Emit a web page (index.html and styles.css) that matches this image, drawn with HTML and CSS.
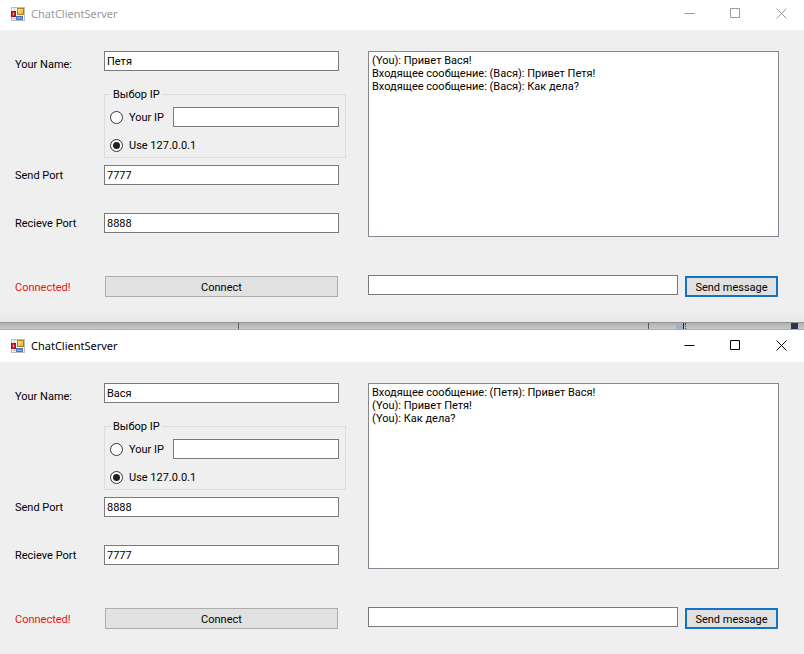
FILE: index.html
```html
<!DOCTYPE html>
<html lang="ru">
<head>
<meta charset="utf-8">
<title>ChatClientServer</title>
<link rel="stylesheet" href="styles.css">
</head>
<body>
<svg class="defs" width="0" height="0" aria-hidden="true">
  <defs>
    <linearGradient id="gold" x1="0" y1="0" x2="1" y2="1"><stop offset="0" stop-color="#fff0a0"/><stop offset="1" stop-color="#e0a410"/></linearGradient>
    <linearGradient id="blue" x1="0" y1="0" x2="0" y2="1"><stop offset="0" stop-color="#3f78d0"/><stop offset="1" stop-color="#9cc4f4"/></linearGradient>
    <symbol id="app" viewBox="0 0 14 14">
      <rect x=".5" y=".5" width="13" height="13" fill="#f8f8f8" stroke="#b9bcc0"/>
      <path d="M3.5 1v3M3.5 10v3M1 11.5h4" stroke="#c8cbd0"/>
      <rect x=".5" y="4.500" width="4" height="5" fill="#c83030" stroke="#991515"/>
      <rect x="2" y="6" width="1" height="2" fill="#f0a0a0"/>
      <rect x="6.500" y="1.500" width="6" height="6" fill="url(#gold)" stroke="#b08414"/>
      <rect x="5.500" y="9.500" width="6" height="3" fill="url(#blue)" stroke="#4a78bd"/>
    </symbol>
    <symbol id="min" viewBox="0 0 11 11"><path d="M.5 5.500h10" stroke="currentColor"/></symbol>
    <symbol id="max" viewBox="0 0 11 11"><path d="M1 1h9v9H1z" transform="translate(-.5 -.5)" fill="none" stroke="currentColor"/></symbol>
    <symbol id="close" viewBox="0 0 11 11"><path d="M.5.5l10 10M10.500.5l-10 10" stroke="currentColor"/></symbol>
  </defs>
</svg>

<section class="window inactive">
  <header class="titlebar">
    <svg class="app-icon"><use href="#app"/></svg>
    <h1>ChatClientServer</h1>
    <div class="caption">
      <button type="button" aria-label="Minimize"><svg><use href="#min"/></svg></button>
      <button type="button" aria-label="Maximize"><svg><use href="#max"/></svg></button>
      <button type="button" aria-label="Close"><svg><use href="#close"/></svg></button>
    </div>
  </header>
  <main class="client">
    <form class="settings">
      <div class="row name"><label for="name1">Your Name:</label><input class="box" id="name1" type="text" value="Петя"></div>
      <fieldset>
        <legend>Выбор IP</legend>
        <div class="option"><input type="radio" name="ip" id="own1"><label for="own1">Your IP</label><input class="box" type="text" aria-label="Your IP"></div>
        <div class="option"><input type="radio" name="ip" id="local1" checked><label for="local1">Use 127.0.0.1</label></div>
      </fieldset>
      <div class="row"><label for="send1">Send Port</label><input class="box" id="send1" type="text" value="7777"></div>
      <div class="row receive"><label for="recv1">Recieve Port</label><input class="box" id="recv1" type="text" value="8888"></div>
      <div class="row connect"><output>Connected!</output><button type="button" class="push">Connect</button></div>
    </form>
    <form class="chat">
      <textarea aria-label="Messages" readonly>(You): Привет Вася!
Входящее сообщение: (Вася): Привет Петя!
Входящее сообщение: (Вася): Как дела?</textarea>
      <div class="compose"><input class="box" type="text" aria-label="Message"><button type="button" class="push default">Send message</button></div>
    </form>
  </main>
</section>

<div class="backdrop"><span class="seam"></span><span class="seam"></span><span class="block"></span><span class="grip"></span><span class="dark"></span></div>

<section class="window active">
  <header class="titlebar">
    <svg class="app-icon"><use href="#app"/></svg>
    <h1>ChatClientServer</h1>
    <div class="caption">
      <button type="button" aria-label="Minimize"><svg><use href="#min"/></svg></button>
      <button type="button" aria-label="Maximize"><svg><use href="#max"/></svg></button>
      <button type="button" aria-label="Close"><svg><use href="#close"/></svg></button>
    </div>
  </header>
  <main class="client">
    <form class="settings">
      <div class="row name"><label for="name2">Your Name:</label><input class="box" id="name2" type="text" value="Вася"></div>
      <fieldset>
        <legend>Выбор IP</legend>
        <div class="option"><input type="radio" name="ip" id="own2"><label for="own2">Your IP</label><input class="box" type="text" aria-label="Your IP"></div>
        <div class="option"><input type="radio" name="ip" id="local2" checked><label for="local2">Use 127.0.0.1</label></div>
      </fieldset>
      <div class="row"><label for="send2">Send Port</label><input class="box" id="send2" type="text" value="8888"></div>
      <div class="row receive"><label for="recv2">Recieve Port</label><input class="box" id="recv2" type="text" value="7777"></div>
      <div class="row connect"><output>Connected!</output><button type="button" class="push">Connect</button></div>
    </form>
    <form class="chat">
      <textarea aria-label="Messages" readonly>Входящее сообщение: (Петя): Привет Вася!
(You): Привет Петя!
(You): Как дела?</textarea>
      <div class="compose"><input class="box" type="text" aria-label="Message"><button type="button" class="push default">Send message</button></div>
    </form>
  </main>
</section>
</body>
</html>
```
FILE: styles.css
```css
* { box-sizing: border-box; }

body {
  margin: 0;
  background: #efefef;
  color: #000;
  font: 11px/13px Roboto, "Liberation Sans", sans-serif;
}

.defs { position: absolute; }

input, button, textarea {
  margin: 0;
  font: inherit;
  color: inherit;
  border-radius: 0;
}

/* Title bar */
.titlebar {
  display: flex;
  align-items: center;
  height: 30px;
  padding: 0 0 3px 11px;
  background: #fff;
  color: #000;
}
.active .titlebar { height: 32px; padding-top: 2px; }
.inactive .titlebar { color: #999; }
.app-icon { width: 14px; height: 14px; margin-right: 6px; }
.titlebar h1 {
  margin: 0;
  font: 11px/16px "Noto Sans", sans-serif;
}
.caption { display: flex; margin-left: auto; }
.caption button {
  display: flex;
  align-items: center;
  justify-content: center;
  width: 46px;
  height: 27px;
  padding: 0;
  border: 0;
  background: none;
}
.caption svg { width: 11px; height: 11px; }

/* Client area */
.client {
  display: flex;
  gap: 22px;
  padding: 21px 25px 25px 15px;
  background: #efefef;
}
.inactive .client {
  background: linear-gradient(#efefef 96%, #e8e8e8);
}
.settings { width: 331px; }
.row {
  display: flex;
  align-items: center;
  padding-right: 7px;
}
.row > label, .row > output { width: 89px; flex: none; }
.row .box { flex: 1; }
.name > label { align-self: flex-end; }

.box {
  min-width: 0;
  height: 20px;
  padding: 0 2px;
  border: 1px solid #7a7a7a;
  background: #fff;
}

fieldset {
  margin: 17px 0 7px 89px;
  padding: 6px 6px 5px 5px;
  min-width: 0;
  border: 1px solid #dcdcdc;
}
legend { margin-left: 1px; padding: 0 2px; }
.option { display: flex; align-items: center; }
.option + .option { margin-top: 12px; }
.option label { width: 44px; margin-left: 6px; white-space: nowrap; }
.option .box { flex: 1; }

input[type="radio"] {
  appearance: none;
  display: grid;
  place-items: center;
  flex: none;
  width: 13px;
  height: 13px;
  border: 1px solid #333;
  border-radius: 50%;
  background: #fff;
}
input[type="radio"]:checked::before {
  content: "";
  width: 7px;
  height: 7px;
  border-radius: 50%;
  background: #222;
}

.receive { margin-top: 28px; }
.connect { margin-top: 43px; padding-right: 8px; }
output { padding-top: 2px; color: #ee1111; }

.push {
  height: 21px;
  padding: 1px 0 0;
  border: 1px solid #adadad;
  background: #e1e1e1;
}
.connect .push { flex: 1; margin-left: 1px; }

/* Chat */
.chat {
  display: flex;
  flex: 1;
  min-width: 0;
  flex-direction: column;
  justify-content: space-between;
}
textarea {
  width: 100%;
  height: 186px;
  padding: 2px 3px;
  border: 1px solid #828790;
  background: #fff;
  resize: none;
}
.compose { display: flex; gap: 7px; padding-right: 1px; }
.compose .box { flex: 1; }
.push.default {
  width: 93px;
  margin-top: 1px;
  border: 2px solid #1473c4;
}

/* Strip of the window behind, seen between the two chat windows */
.backdrop {
  display: grid;
  grid-template-columns: 238fr 1px 409fr 1px 27fr 7px 1px 2px 105fr 7px 6px;
  height: 8px;
  border-top: 1px solid #949494;
  border-bottom: 1px solid #e3a35c;
  background: linear-gradient(#b0b0b0, #c9c9c9);
}
.seam { grid-row: 1; background: #555; }
.seam:nth-child(1) { grid-column: 2; }
.seam:nth-child(2) { grid-column: 4; }
.block { grid-row: 1; grid-column: 6; background: #a5b0c0; }
.grip { grid-row: 1; grid-column: 7 / 9; border-left: 1px solid #222; border-right: 1px dotted #444; }
.dark { grid-row: 1; grid-column: 10; background: #2b3450; }
```
